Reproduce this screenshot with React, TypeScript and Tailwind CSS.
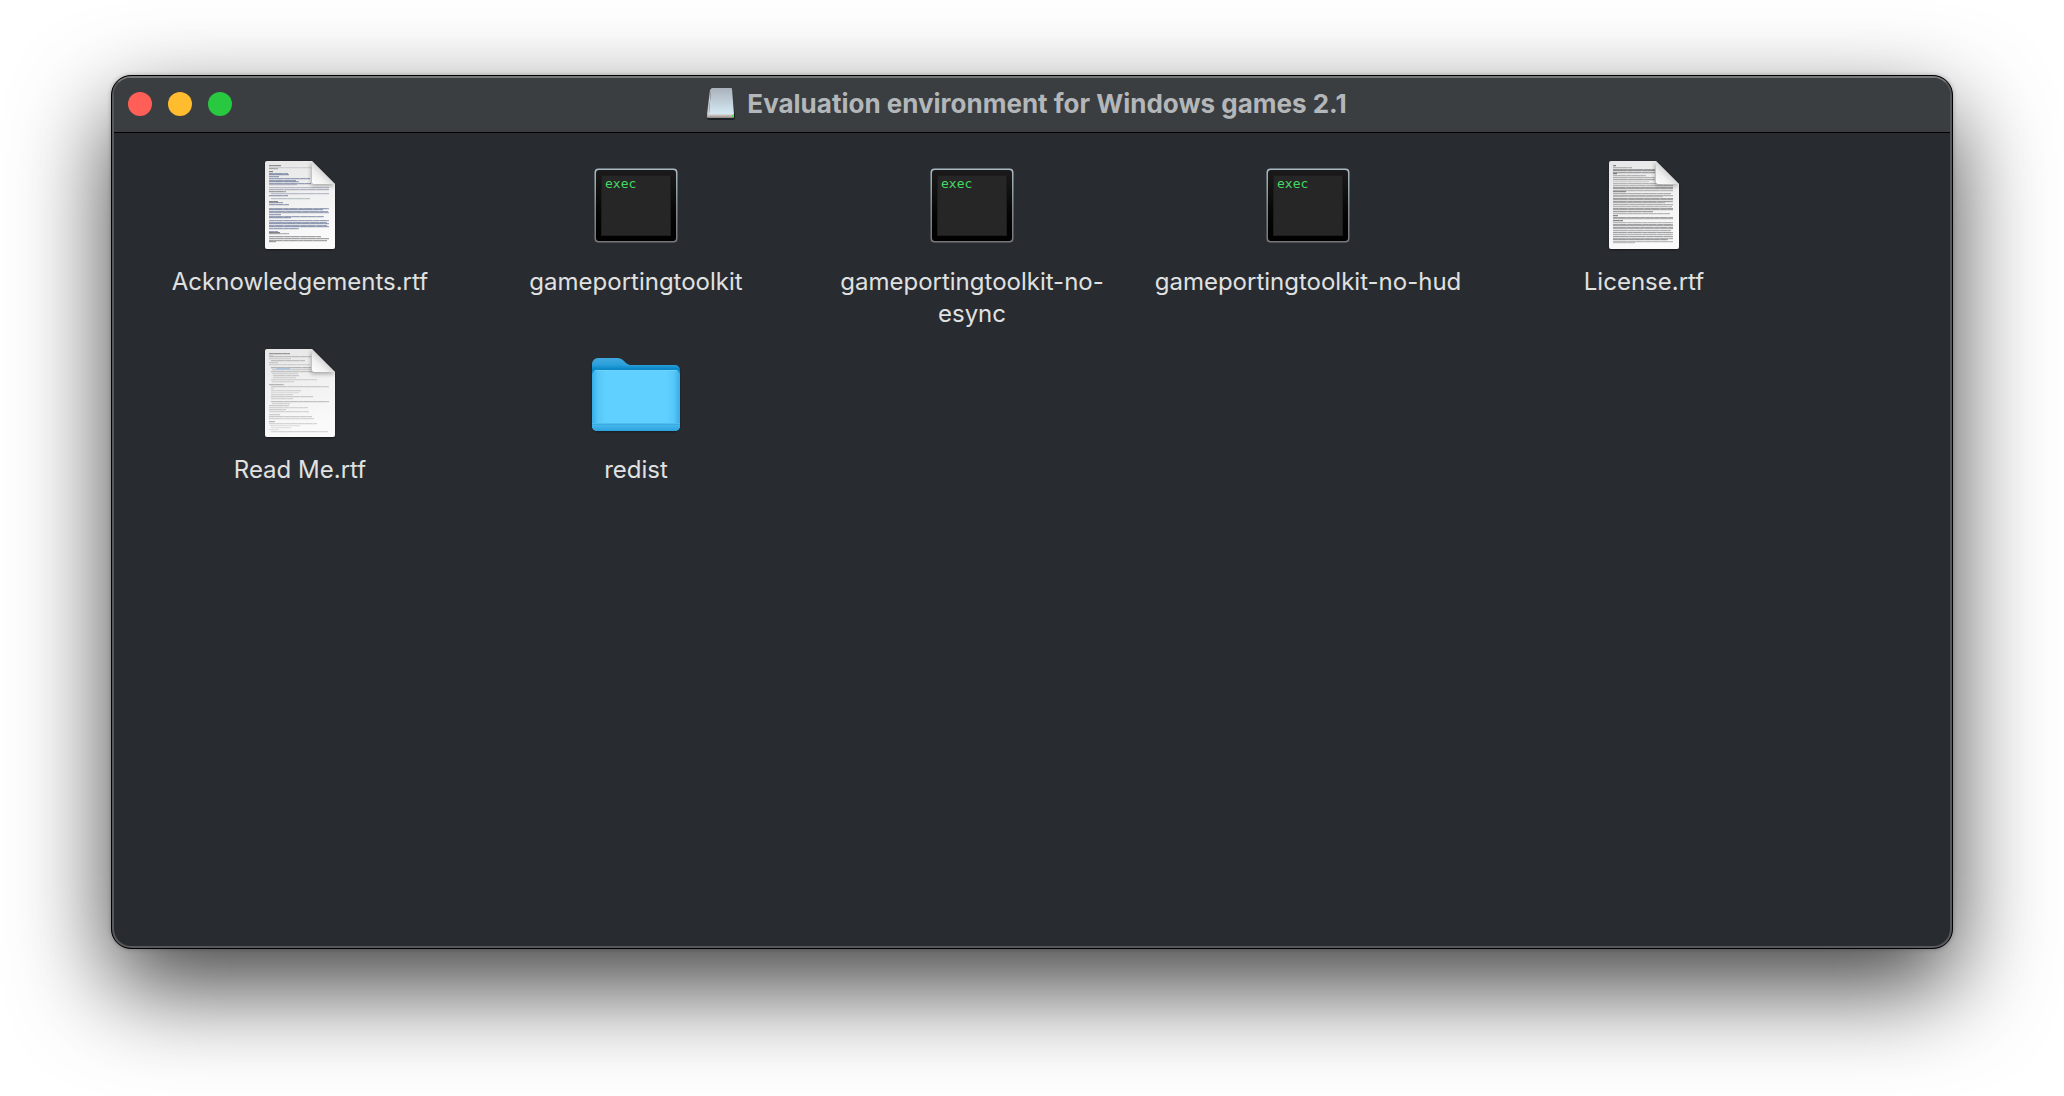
import React from "react";

type Line = [y: number, x: number, width: number, color: string];

const INK = "#5b5d62";
const BLUE = "#4d5f85";
const PALE = "#b9babd";

const ACKNOWLEDGEMENTS: Line[] = [
  [8, 17, 12, "#444"], [10, 17, 42, PALE], [11, 17, 9, "#777"],
  [14, 17, 4, "#333"], [16, 17, 19, BLUE], [17, 17, 20, BLUE], [19, 17, 10, BLUE],
  [21, 17, 41, BLUE], [23, 17, 27, BLUE], [24, 17, 30, BLUE], [26, 17, 42, BLUE], [27, 17, 28, "#8b93a8"],
  [30, 17, 60, "#8b93a8"], [32, 17, 60, "#7a839b"], [34, 17, 17, INK],
  [36, 19, 58, "#8b93a8"], [38, 17, 19, BLUE], [41, 19, 39, "#8fa0a8"],
  [44, 17, 9, "#333"], [45, 17, 14, BLUE], [47, 17, 20, BLUE],
  [51, 17, 60, BLUE], [52, 17, 54, BLUE], [54, 17, 59, BLUE], [55, 17, 60, "#6a7897"], [57, 17, 12, BLUE],
  [59, 17, 55, BLUE], [60, 17, 22, BLUE],
  [63, 17, 60, BLUE], [65, 17, 58, BLUE], [66, 17, 60, BLUE], [68, 17, 58, BLUE], [69, 17, 60, BLUE], [71, 17, 30, BLUE],
  [74, 17, 9, BLUE], [75, 17, 11, "#333"], [76, 17, 20, "#777"],
  [79, 17, 52, INK], [81, 17, 60, INK], [83, 17, 58, INK], [84, 17, 7, INK],
];

const LICENSE: Line[] = [
  [8, 17, 3, "#333"], [10, 17, 19, "#888"], [12, 17, 42, INK], [13, 17, 42, INK], [15, 17, 42, "#666"], [16, 17, 4, "#333"],
  [18, 17, 33, "#888"], [20, 17, 42, "#888"], [22, 17, 42, "#777"], [24, 17, 36, PALE], [26, 17, 48, "#888"],
  [28, 17, 60, "#888"], [30, 17, 60, INK], [31, 17, 60, "#777"], [33, 17, 60, "#888"], [34, 17, 13, "#444"],
  [36, 17, 58, "#777"], [38, 17, 60, "#777"], [39, 17, 50, "#999"],
  [41, 17, 60, INK], [42, 17, 60, "#777"], [44, 17, 60, INK], [45, 17, 52, "#888"],
  [47, 17, 60, "#777"], [49, 17, 59, "#888"], [51, 17, 60, INK], [52, 17, 60, "#777"], [54, 17, 40, INK],
  [56, 17, 57, "#888"], [58, 17, 5, "#333"], [60, 17, 60, INK], [61, 17, 60, "#888"], [63, 17, 10, "#333"],
  [65, 17, 60, "#888"], [67, 17, 60, INK], [68, 17, 60, "#777"], [70, 17, 60, INK], [71, 17, 60, "#888"],
  [73, 17, 58, "#777"], [75, 17, 60, INK], [77, 17, 60, "#777"],
  [79, 17, 60, INK], [81, 17, 60, "#777"], [82, 17, 55, INK], [84, 17, 60, "#888"], [85, 17, 22, "#999"],
];

const READ_ME: Line[] = [
  [8, 17, 21, "#555"], [10, 17, 4, PALE], [11, 17, 42, "#999"], [13, 17, 22, PALE], [15, 19, 34, "#999"],
  [17, 17, 9, "#aaa"], [19, 17, 41, PALE], [22, 19, 40, "#888"], [23, 24, 14, "#7fb2e6"], [24, 20, 39, "#a4aebb"],
  [26, 19, 48, "#a0a0a0"], [28, 20, 26, PALE], [30, 21, 26, "#aaa"], [32, 21, 23, PALE], [34, 19, 46, PALE], [36, 20, 22, PALE],
  [39, 17, 15, "#888"], [41, 19, 58, "#aaa"], [43, 19, 3, PALE], [45, 19, 30, PALE], [47, 19, 28, "#ccc"],
  [49, 19, 22, PALE], [51, 19, 42, "#aaa"], [53, 19, 22, PALE], [56, 19, 58, "#999"], [58, 20, 18, PALE],
  [60, 17, 20, "#aaa"], [62, 17, 39, PALE], [64, 17, 17, "#aaa"], [66, 17, 40, PALE], [69, 17, 11, "#aaa"],
  [71, 17, 43, "#aaa"], [73, 17, 45, PALE], [76, 17, 6, "#888"], [78, 17, 48, PALE], [80, 18, 30, "#ccc"],
  [82, 19, 20, "#ccc"], [84, 17, 10, "#ccc"], [86, 19, 57, PALE],
];

function DocumentIcon({ id, lines }: { id: string; lines: Line[] }) {
  return (
    <svg viewBox="0 0 96 96" className="size-24" aria-hidden="true">
      <defs>
        <linearGradient id={`${id}-page`} x1="0" y1="0" x2="0.3" y2="1">
          <stop offset="0" stopColor="#e6e6e6" />
          <stop offset="1" stopColor="#fafafa" />
        </linearGradient>
        <linearGradient id={`${id}-fold`} x1="60" y1="28" x2="72" y2="15" gradientUnits="userSpaceOnUse">
          <stop offset="0" stopColor="#ffffff" />
          <stop offset="0.6" stopColor="#f1f1f1" />
          <stop offset="1" stopColor="#d4d4d4" />
        </linearGradient>
        <filter id={`${id}-shadow`} x="-20%" y="-20%" width="140%" height="140%">
          <feDropShadow dx="0" dy="1" stdDeviation="1.2" floodOpacity="0.45" />
        </filter>
        <filter id={`${id}-curl`} x="-50%" y="-50%" width="200%" height="200%">
          <feGaussianBlur stdDeviation="2" />
        </filter>
        <clipPath id={`${id}-clip`}>
          <path d="M15 4H60L83 27V90a2 2 0 0 1-2 2H15a2 2 0 0 1-2-2V6a2 2 0 0 1 2-2Z" />
        </clipPath>
      </defs>
      <path
        d="M15 4H60L83 27V90a2 2 0 0 1-2 2H15a2 2 0 0 1-2-2V6a2 2 0 0 1 2-2Z"
        fill={`url(#${id}-page)`}
        filter={`url(#${id}-shadow)`}
      />
      <g clipPath={`url(#${id}-clip)`}>
        {lines.map(([y, x, width, color], i) => (
          <g key={i} stroke={color}>
            <path d={`M${x} ${y + 0.5}h${width}`} strokeOpacity="0.45" />
            <path d={`M${x} ${y + 0.5}h${width}`} strokeOpacity="0.2" strokeDasharray={`${4 + (i % 3)} 1 ${7 + (i % 2)} 2`} />
            <path d={`M${x} ${y + 1.5}h${width}`} strokeOpacity="0.14" />
          </g>
        ))}
        <path d="M59 5V29H84Z" fill="#000" opacity="0.3" filter={`url(#${id}-curl)`} />
        <path d="M60 4L83 27H62a2 2 0 0 1-2-2Z" fill={`url(#${id}-fold)`} />
      </g>
    </svg>
  );
}

function ExecIcon({ id }: { id: string }) {
  return (
    <svg viewBox="0 0 96 96" className="size-24" aria-hidden="true">
      <defs>
        <linearGradient id={`${id}-rim`} x1="0" y1="0" x2="0" y2="1">
          <stop offset="0" stopColor="#a9b9c1" />
          <stop offset="0.5" stopColor="#858d92" />
          <stop offset="1" stopColor="#787575" />
        </linearGradient>
        <linearGradient id={`${id}-bezel`} x1="0" y1="0" x2="0" y2="1">
          <stop offset="0" stopColor="#1b1b1b" />
          <stop offset="0.6" stopColor="#050505" />
          <stop offset="1" stopColor="#000" />
        </linearGradient>
      </defs>
      <rect x="6.500" y="11.500" width="83" height="74" rx="4" fill={`url(#${id}-rim)`} />
      <rect x="8" y="13" width="80" height="71" rx="3" fill={`url(#${id}-bezel)`} />
      <rect x="13" y="18" width="70" height="61" fill="#1c1c1c" />
      <rect x="14" y="19" width="68" height="59" fill="#262626" />
      <text x="17" y="31" fill="#45d963" className="font-['DejaVu_Sans_Mono',monospace] text-[13px]">
        exec
      </text>
    </svg>
  );
}

function FolderIcon() {
  return (
    <svg viewBox="0 0 96 96" className="size-24" aria-hidden="true">
      <defs>
        <linearGradient id="folder-back" x1="0" y1="13" x2="0" y2="28" gradientUnits="userSpaceOnUse">
          <stop offset="0" stopColor="#3fa9df" />
          <stop offset="0.45" stopColor="#2ba0db" />
          <stop offset="0.75" stopColor="#0a86c6" />
        </linearGradient>
        <linearGradient id="folder-side" x1="0" y1="0" x2="1" y2="0">
          <stop offset="0" stopColor="#35aee6" />
          <stop offset="0.07" stopColor="#57c7f9" />
          <stop offset="0.16" stopColor="#5fd0ff" />
          <stop offset="0.84" stopColor="#5fd0ff" />
          <stop offset="0.93" stopColor="#57c7f9" />
          <stop offset="1" stopColor="#35aee6" />
        </linearGradient>
        <linearGradient id="folder-lip" x1="0" y1="0" x2="0" y2="1">
          <stop offset="0" stopColor="#46b6ec" />
          <stop offset="1" stopColor="#2ba2df" />
        </linearGradient>
        <clipPath id="folder-front">
          <rect x="4" y="25" width="88" height="61" rx="5" />
        </clipPath>
        <filter id="folder-shadow" x="-10%" y="-10%" width="120%" height="120%">
          <feDropShadow dx="0" dy="1" stdDeviation="0.8" floodOpacity="0.4" />
        </filter>
      </defs>
      <path
        d="M4 19a6 6 0 0 1 6-6H29c3 0 5 1 7 3l2 2c2 1.500 3 2 6 2H87a5 5 0 0 1 5 5V80a6 6 0 0 1-6 6H10a6 6 0 0 1-6-6Z"
        fill="url(#folder-back)"
        filter="url(#folder-shadow)"
      />
      <g clipPath="url(#folder-front)">
        <rect x="4" y="25" width="88" height="61" fill="url(#folder-side)" />
        <rect x="4" y="25" width="88" height="1" fill="#6fd2fb" />
        <rect x="4" y="78" width="88" height="1" fill="#50bdf0" />
        <rect x="4" y="79" width="88" height="1" fill="#3aace4" />
        <rect x="4" y="80" width="88" height="6" fill="url(#folder-lip)" />
      </g>
    </svg>
  );
}

function DiskIcon() {
  return (
    <svg viewBox="0 0 32 36" className="h-9 w-8" aria-hidden="true">
      <defs>
        <linearGradient id="disk-top" x1="0" y1="0" x2="0" y2="1">
          <stop offset="0" stopColor="#a9b1bb" />
          <stop offset="1" stopColor="#d5eaf5" />
        </linearGradient>
        <linearGradient id="disk-edge" x1="0" y1="0" x2="0" y2="1">
          <stop offset="0" stopColor="#e2dedc" />
          <stop offset="1" stopColor="#8d8683" />
        </linearGradient>
      </defs>
      <path d="M6 2H26L30 29V32a2 2 0 0 1-2 2H4a2 2 0 0 1-2-2V28Z" fill="#1f2224" />
      <path d="M5 4L2 28H4L6 3Z" fill="#c9cdd0" />
      <path d="M7 2H26a1 1 0 0 1 1 1L29 28H4L6 3a1 1 0 0 1 1-1Z" fill="url(#disk-top)" />
      <rect x="2" y="28" width="27" height="4" rx="1" fill="url(#disk-edge)" />
      <rect x="27" y="29" width="1" height="2" fill="#3fdc3f" />
    </svg>
  );
}

const FILES: { name: string; icon: React.ReactNode }[] = [
  { name: "Acknowledgements.rtf", icon: <DocumentIcon id="ack" lines={ACKNOWLEDGEMENTS} /> },
  { name: "gameportingtoolkit", icon: <ExecIcon id="gptk" /> },
  { name: "gameportingtoolkit-no-esync", icon: <ExecIcon id="esync" /> },
  { name: "gameportingtoolkit-no-hud", icon: <ExecIcon id="hud" /> },
  { name: "License.rtf", icon: <DocumentIcon id="license" lines={LICENSE} /> },
  { name: "Read Me.rtf", icon: <DocumentIcon id="readme" lines={READ_ME} /> },
  { name: "redist", icon: <FolderIcon /> },
];

const CONTROLS = [
  { label: "Close", color: "bg-[#ff5f57]" },
  { label: "Minimize", color: "bg-[#febc2e]" },
  { label: "Zoom", color: "bg-[#28c840]" },
];

export default function App() {
  return (
    <div className="flex min-h-screen bg-white px-[111px] pt-[75px] pb-[147px] font-[Inter,'Liberation_Sans',sans-serif]">
      <main className="flex flex-1 flex-col overflow-hidden rounded-[20px] border border-black bg-[#282b30] shadow-[0_38px_96px_rgba(0,0,0,0.75),0_0_4px_rgba(0,0,0,0.25)]">
        <div className="flex flex-1 flex-col rounded-[19px] border-2 border-[#56585c] border-t-[#77797c]">
          <header className="grid h-[55px] shrink-0 grid-cols-[1fr_auto_1fr] items-center rounded-t-[17px] border-b border-black bg-[#3b3e41] px-[14px] pb-0.5">
            <div className="flex gap-4">
              {CONTROLS.map(({ label, color }) => (
                <button key={label} type="button" aria-label={label} className={`size-6 rounded-full ${color}`} />
              ))}
            </div>
            <div className="flex items-center gap-2.5 pr-3">
              <DiskIcon />
              <h1 className="text-[26px] leading-8 font-bold text-[#b4b7b9]">Evaluation environment for Windows games 2.1</h1>
            </div>
          </header>
          <ul className="grid grid-cols-[repeat(auto-fill,336px)] gap-y-[15px] px-[18px] pt-6">
            {FILES.map(({ name, icon }) => (
              <li key={name}>
                <button type="button" className="flex min-h-[173px] w-full flex-col items-center gap-[13px] px-3 text-[24px] leading-8 text-[#e0e1e1]">
                  {icon}
                  <span>{name}</span>
                </button>
              </li>
            ))}
          </ul>
        </div>
      </main>
    </div>
  );
}
